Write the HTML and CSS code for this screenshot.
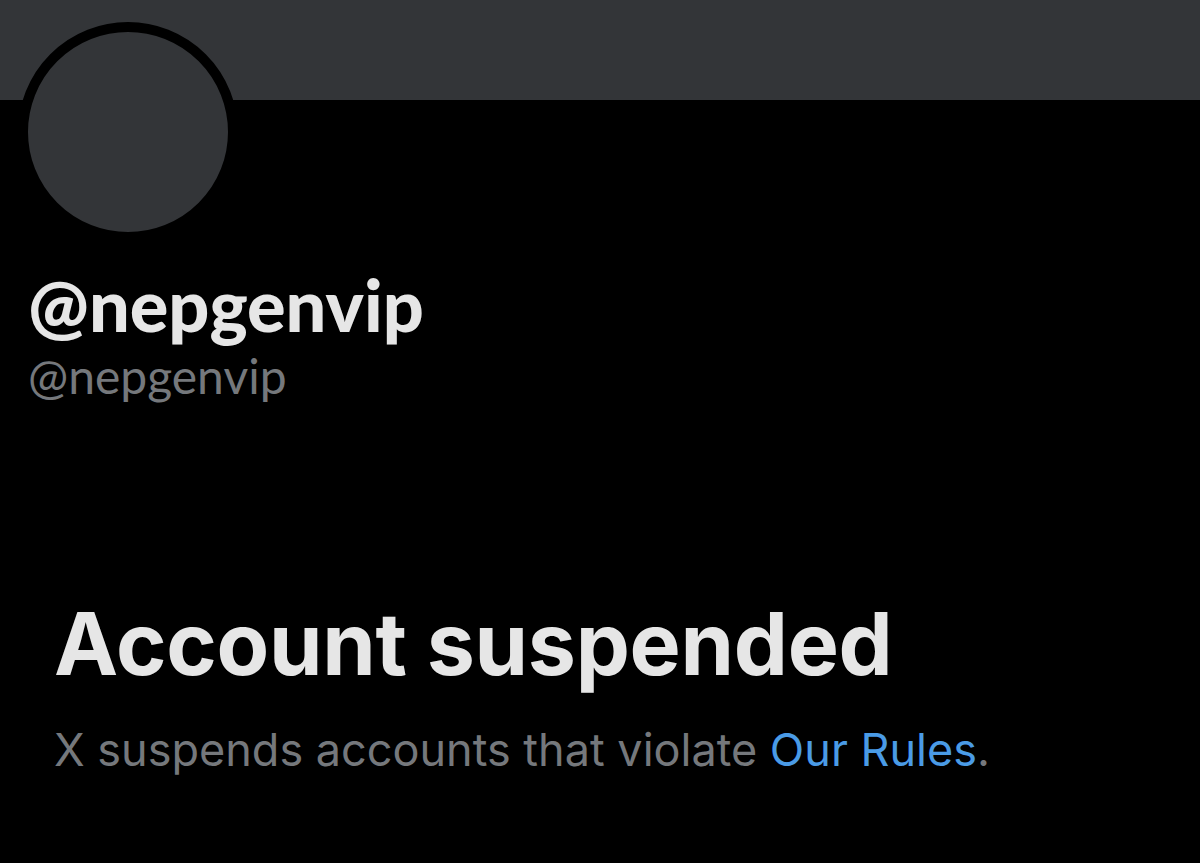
FILE: index.html
```html
<!DOCTYPE html>
<html>
<head>
<meta charset="utf-8">
<link rel="stylesheet" href="styles.css">
</head>
<body>
<div class="page">
  <div class="banner"></div>
  <div class="profile">
    <div class="avatar"></div>
    <div class="names">
      <div class="display">@nepgenvip</div>
      <div class="handle">@nepgenvip</div>
    </div>
    <div class="notice">
      <h1 class="title">Account suspended</h1>
      <p class="desc">X suspends accounts that violate <a class="link">Our Rules</a>.</p>
    </div>
  </div>
</div>
</body>
</html>
```
FILE: styles.css
```css
html, body {
  margin: 0;
  padding: 0;
  background: #000;
}
.page {
  width: 1200px;
  height: 863px;
  overflow: hidden;
  background: #000;
}
.banner {
  height: 100px;
  background: #333538;
}
.profile {
  padding-left: 18px;
}
.avatar {
  width: 200px;
  height: 200px;
  margin-top: -78px;
  margin-bottom: 19px;
  border-radius: 50%;
  background: #333538;
  border: 10px solid #000;
}
.names {
  padding-left: 10px;
}
.display {
  font-family: "Lato", sans-serif;
  font-weight: 900;
  font-size: 72px;
  line-height: 86px;
  color: #e6e6e6;
}
.handle {
  font-family: "Lato", sans-serif;
  font-weight: 400;
  font-size: 48px;
  line-height: 58px;
  color: #75787c;
}
.notice {
  padding-left: 36px;
  margin-top: 189px;
}
.title {
  margin: 0;
  font-family: "Inter", sans-serif;
  font-weight: 700;
  font-size: 86px;
  line-height: 100px;
  letter-spacing: -0.3px;
  color: #e6e6e6;
}
.desc {
  margin: 26px 0 0;
  font-family: "Inter", sans-serif;
  font-weight: 400;
  font-size: 45px;
  line-height: 60px;
  color: #75787c;
}
.link {
  color: #4a9be6;
}
```
